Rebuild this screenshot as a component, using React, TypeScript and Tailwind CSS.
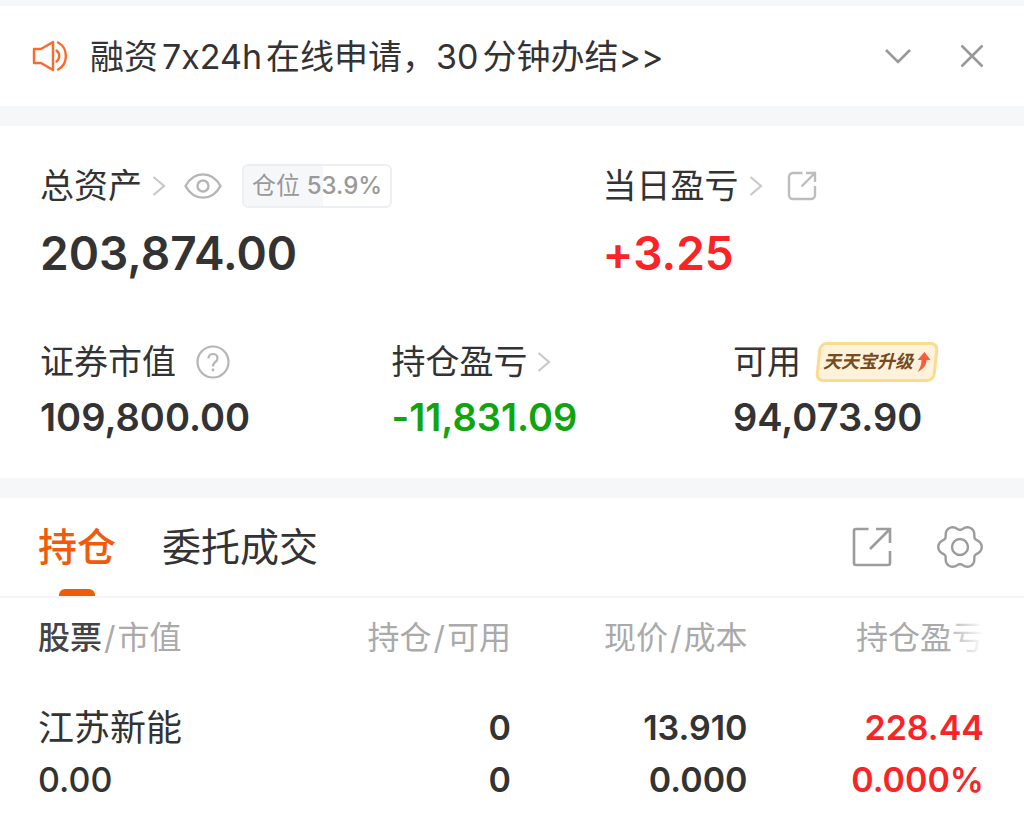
import type { ReactNode } from "react";
import { clsx } from "clsx";

const holdings = [
  {
    name: "江苏新能",
    value: "0.00",
    amount: "0",
    available: "0",
    price: "13.910",
    cost: "0.000",
    profit: "228.44",
    rate: "0.000%",
  },
];

// outline of the settings gear, six soft teeth
const gearPath =
  Array.from({ length: 120 }, (_, i) => {
    const a = (i / 120) * Math.PI * 2;
    const r = 19.7 + 2.3 * Math.cos(6 * a) - 0.3 * Math.cos(12 * a);
    const x = (24 + r * Math.cos(a)).toFixed(2);
    const y = (24 + r * Math.sin(a)).toFixed(2);
    return `${i === 0 ? "M" : "L"}${x} ${y}`;
  }).join("") + "Z";

function SpeakerIcon() {
  return (
    <svg
      viewBox="0 0 36 32"
      className="h-8 w-9"
      fill="none"
      stroke="#f96a2b"
      strokeWidth="2.4"
      strokeLinejoin="round"
      strokeLinecap="round"
    >
      <path d="M2 9h7L21 2v28L9 23H2z" />
      <path d="M24.5 10.5a7 7 0 0 1 0 11" />
      <path d="M26 2.5c10.500 5.500 10.500 21.500 0 27" />
    </svg>
  );
}

function ArrowRight() {
  return (
    <svg
      viewBox="0 0 14 22"
      className="h-[22px] w-3.5"
      fill="none"
      stroke="#c9c9c9"
      strokeWidth="2.2"
    >
      <path d="M1.5 2 12 11 1.5 20" />
    </svg>
  );
}

function EyeIcon() {
  return (
    <svg
      viewBox="0 0 38 28"
      className="h-7 w-[38px]"
      fill="none"
      stroke="#b5b5b5"
      strokeWidth="2.4"
    >
      <path d="M1.5 14C10-1.500 28-1.500 36.500 14 28 29.500 10 29.500 1.500 14z" />
      <circle cx="19" cy="14" r="5.5" />
    </svg>
  );
}

function ShareIcon() {
  return (
    <svg
      viewBox="0 0 30 30"
      className="size-[30px]"
      fill="none"
      stroke="#bdbdbd"
      strokeWidth="2.4"
    >
      <path d="M15.5 2H6a4 4 0 0 0-4 4v18a4 4 0 0 0 4 4h18a4 4 0 0 0 4-4v-9" />
      <path d="M19 2h9v9M28 2 14.5 15.5" />
    </svg>
  );
}

function ExportIcon() {
  return (
    <svg
      viewBox="0 0 40 40"
      className="size-10"
      fill="none"
      stroke="#9c9c9c"
      strokeWidth="2.6"
    >
      <path d="M16.5 2H4a2 2 0 0 0-2 2v32a2 2 0 0 0 2 2h32a2 2 0 0 0 2-2V24" />
      <path d="M24 2h14v14M38 2 18 22" />
    </svg>
  );
}

function GearIcon() {
  return (
    <svg
      viewBox="0 0 48 48"
      className="size-12"
      fill="none"
      stroke="#9c9c9c"
      strokeWidth="2.4"
      strokeLinejoin="round"
    >
      <path d={gearPath} />
      <circle cx="24" cy="24" r="8" />
    </svg>
  );
}

function Stat({
  label,
  value,
  large,
  color = "text-[#333]",
  children,
}: {
  label: string;
  value: string;
  large?: boolean;
  color?: string;
  children?: ReactNode;
}) {
  return (
    <div>
      <div className="flex h-11 items-center text-[34px] leading-none">
        <span>{label}</span>
        {children}
      </div>
      <p
        className={clsx(
          "font-semibold",
          large ? "mt-4 text-[46px] leading-[58px]" : "mt-2 text-[38px] leading-[50px]",
          color
        )}
      >
        {value}
      </p>
    </div>
  );
}

function Notice() {
  return (
    <section className="flex h-[100px] items-center bg-white pr-10 pl-8">
      <SpeakerIcon />
      <p className="ml-[22px] flex flex-1 gap-1 pt-0.5 text-[34px] leading-9 whitespace-nowrap">
        <span>融资</span>
        <span>7x24h</span>
        <span>在线申请，30</span>
        <span>分钟办结&gt;&gt;</span>
      </p>
      <button aria-label="展开" className="mr-12">
        <svg viewBox="0 0 28 24" className="h-6 w-7" fill="none" stroke="#999" strokeWidth="2.6">
          <path d="M2 6 14 18 26 6" />
        </svg>
      </button>
      <button aria-label="关闭">
        <svg viewBox="0 0 24 24" className="size-6" fill="none" stroke="#999" strokeWidth="2.6">
          <path d="M1.5 1.5 22.5 22.5M22.5 1.5 1.5 22.5" />
        </svg>
      </button>
    </section>
  );
}

function Assets() {
  return (
    <section className="mt-5 bg-white px-10 pt-[38px] pb-9">
      <div className="grid grid-cols-[149fr_101fr]">
        <Stat label="总资产" value="203,874.00" large>
          <span className="ml-2.5">
            <ArrowRight />
          </span>
          <button aria-label="隐藏金额" className="ml-[18px]">
            <EyeIcon />
          </button>
          <span className="ml-5 rounded-md border-2 border-[#eeeff2] bg-linear-to-r from-[#f6f7f9] from-54% to-white to-54% px-2 text-[24px] leading-10 whitespace-nowrap text-[#999]">
            仓位 <span className="font-medium">53.9%</span>
          </span>
        </Stat>
        <Stat label="当日盈亏" value="+3.25" large color="text-[#fa2325]">
          <span className="ml-2.5">
            <ArrowRight />
          </span>
          <button aria-label="分享" className="ml-6">
            <ShareIcon />
          </button>
        </Stat>
      </div>

      <div className="mt-[58px] grid grid-cols-[35fr_34fr_25fr]">
        <Stat label="证券市值" value="109,800.00">
          <button aria-label="说明" className="ml-5">
            <svg viewBox="0 0 34 34" className="size-[34px]" fill="none" stroke="#b5b5b5" strokeWidth="2.2">
              <circle cx="17" cy="17" r="15.5" />
              <path d="M12.5 13.5c0-6 9-6 9 0 0 3.500-4.500 3.500-4.500 8" />
              <circle cx="17" cy="25" r="1.4" fill="#b5b5b5" stroke="none" />
            </svg>
          </button>
        </Stat>
        <Stat label="持仓盈亏" value="-11,831.09" color="text-[#0ea50e]">
          <span className="ml-2.5">
            <ArrowRight />
          </span>
        </Stat>
        <Stat label="可用" value="94,073.90">
          <button className="relative ml-4 flex h-10 items-center px-1.5 text-[18px] font-bold whitespace-nowrap text-[#784a22] italic">
            <span className="absolute inset-0 -skew-x-6 rounded-lg border-3 border-[#fbdc8f] bg-[#fef3da]" />
            <span className="relative">天天宝升级</span>
            <svg viewBox="0 0 16 22" className="relative ml-0.5 h-[22px] w-4">
              <path d="M9.500 1 15.500 9h-4c0 5-3 9-9 12 2.500-3.500 4-7 4-12h-4z" fill="#fb5a3c" />
            </svg>
          </button>
        </Stat>
      </div>
    </section>
  );
}

function Tabs() {
  return (
    <nav className="mt-5 flex h-[100px] items-center border-b-2 border-[#f4f5f7] bg-white pr-10 pl-[38px] text-[39px]">
      <button className="relative flex h-full items-center font-medium text-[#f05a0a]">
        持仓
        <span className="absolute bottom-0 left-1/2 h-[7px] w-9 -translate-x-1/2 rounded-t-md bg-[#f05a0a]" />
      </button>
      <button className="ml-[46px]">委托成交</button>
      <button aria-label="导出" className="ml-auto">
        <ExportIcon />
      </button>
      <button aria-label="设置" className="ml-11">
        <GearIcon />
      </button>
    </nav>
  );
}

function HoldingsTable() {
  return (
    <div className="bg-white pr-10 pb-2.5 pl-[38px]">
      <table className="w-full table-fixed text-right">
        <thead>
          <tr className="h-20 text-[32px] whitespace-nowrap text-[#aaa] *:font-normal">
            <th className="w-1/4 text-left">
              <span className="font-medium text-[#444]">股票</span>
              <span className="mx-0.5">/</span>市值
            </th>
            <th className="w-1/4">
              持仓<span className="mx-0.5">/</span>可用
            </th>
            <th className="w-1/4">
              现价<span className="mx-0.5">/</span>成本
            </th>
            <th className="relative w-1/4">
              持仓盈亏
              <span className="absolute inset-y-0 right-0 w-10 bg-linear-to-l from-white to-transparent" />
            </th>
          </tr>
        </thead>
        <tbody>
          {holdings.map((item) => (
            <tr key={item.name} className="text-[34px] leading-[52px] font-semibold *:pt-6">
              <td className="text-left">
                <p className="text-[36px] font-normal">{item.name}</p>
                <p className="font-medium">{item.value}</p>
              </td>
              <td>
                <p>{item.amount}</p>
                <p>{item.available}</p>
              </td>
              <td>
                <p>{item.price}</p>
                <p>{item.cost}</p>
              </td>
              <td className="text-[#fa2325]">
                <p>{item.profit}</p>
                <p>{item.rate}</p>
              </td>
            </tr>
          ))}
        </tbody>
      </table>
    </div>
  );
}

export default function App() {
  return (
    <main className="min-h-screen bg-[#f6f7f9] pt-1.5 font-['Inter','Noto_Sans_CJK_SC',sans-serif] text-[#333] [font-feature-settings:'calt'_0]">
      <Notice />
      <Assets />
      <Tabs />
      <HoldingsTable />
    </main>
  );
}
